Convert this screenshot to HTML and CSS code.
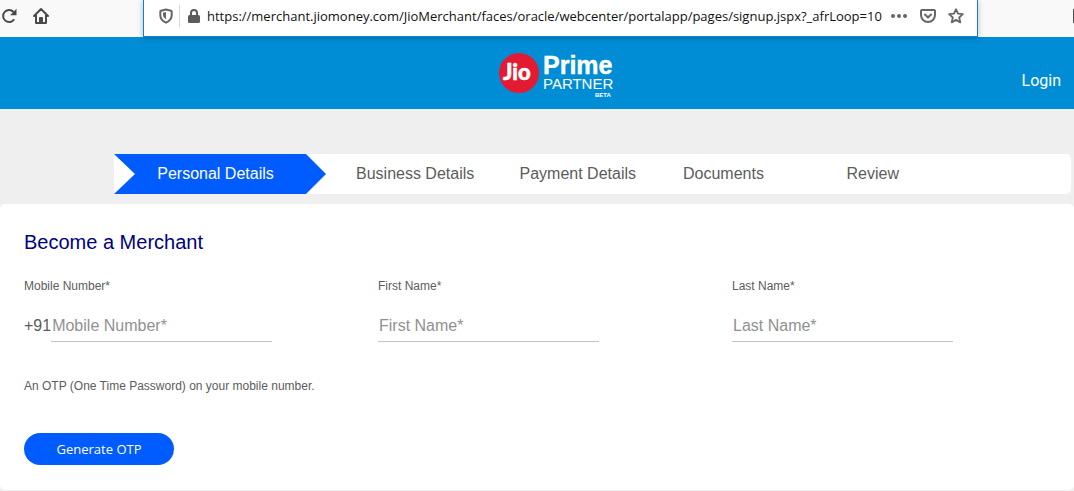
FILE: index.html
```html
<!DOCTYPE html>
<html lang="en">
<head>
<meta charset="utf-8">
<title>Become a Merchant</title>
<link rel="stylesheet" href="styles.css">
</head>
<body>
<div class="toolbar">
  <div class="toolbar-start">
    <button class="icon-button" type="button" aria-label="Reload">
      <svg width="18" height="18" viewBox="0 0 18 18" fill="none" stroke="#4a4a4a" stroke-width="2"><path d="M14.2 12.2A6 6 0 1 1 13.6 5"/><path d="M16.5 1.8v6.4h-6.4z" fill="#4a4a4a" stroke="none"/></svg>
    </button>
    <button class="icon-button" type="button" aria-label="Home">
      <svg width="18" height="18" viewBox="0 0 18 18" fill="none" stroke="#4a4a4a" stroke-width="2" stroke-linejoin="round" stroke-linecap="round"><path d="M2 9l7-7 7 7M4 8v8h10V8"/><path d="M7.5 15.5v-5h3v5z" fill="#4a4a4a" stroke-width="1"/></svg>
    </button>
  </div>
  <div class="address">
    <svg class="shield" width="14" height="16" viewBox="0 0 14 16" fill="none" stroke="#666" stroke-width="2"><path d="M7 1.5L2 2.7Q1.3 3 1.3 4v3c0 4 2.5 6.3 5.7 7.7 3.2-1.4 5.7-3.7 5.7-7.7V4q0-1-.7-1.3z"/><path d="M7 4v7.5C5 10 4 8.5 4 6.5V4.7z" fill="#666" stroke="none"/></svg>
    <span class="divider"></span>
    <svg class="lock" width="12" height="16" viewBox="0 0 12 16" fill="none"><path d="M3 8V5a3 3 0 0 1 6 0v3" stroke="#5c5c5c" stroke-width="2"/><rect y="7" width="12" height="8" rx="1.5" fill="#5c5c5c"/></svg>
    <input class="url" type="text" aria-label="Address" value="https://merchant.jiomoney.com/JioMerchant/faces/oracle/webcenter/portalapp/pages/signup.jspx?_afrLoop=10">
    <button class="icon-button" type="button" aria-label="Page actions">
      <svg width="18" height="16" viewBox="0 0 18 16" fill="#666"><circle cx="3" cy="8" r="2"/><circle cx="9" cy="8" r="2"/><circle cx="15" cy="8" r="2"/></svg>
    </button>
    <button class="icon-button" type="button" aria-label="Save to Pocket">
      <svg width="16" height="16" viewBox="0 0 16 16" fill="none" stroke="#666" stroke-width="2" stroke-linecap="round" stroke-linejoin="round"><path d="M2 2h12q1 0 1 1v4a7 7 0 0 1-14 0V3q0-1 1-1z"/><path d="M5 6.500l3 3 3-3"/></svg>
    </button>
    <button class="icon-button" type="button" aria-label="Bookmark">
      <svg width="16" height="16" viewBox="0 0 16 16" fill="none" stroke="#666" stroke-width="1.8" stroke-linejoin="round"><path d="M8 1.2l2 4.500 4.900.5-3.700 3.300 1.100 4.900L8 11.900l-4.300 2.500 1.100-4.900L1.100 6.200 6 5.700z"/></svg>
    </button>
  </div>
  <div class="toolbar-end"><span class="edge-mark"></span></div>
</div>
<header class="header">
  <svg class="logo" width="118" height="48" viewBox="0 0 118 48" role="img" aria-label="Jio Prime Partner Beta">
    <circle cx="21" cy="22" r="20" fill="#e31b32"/>
    <g fill="#fff" font-family="Liberation Sans, Arial, sans-serif">
      <text x="5" y="29" font-family="Lato, sans-serif" font-weight="900" font-size="22" stroke="#fff" stroke-width="0.5">Jio</text>
      <text x="45" y="23" font-weight="700" font-size="25" stroke="#fff" stroke-width="0.4">Prime</text>
      <text x="45" y="38" font-size="15">PARTNER</text>
      <text x="97" y="46" font-weight="700" font-size="6">BETA</text>
    </g>
  </svg>
  <a class="login" href="#login">Login</a>
</header>
<main>
  <ol class="steps">
    <li class="step step-active" aria-current="step">Personal Details</li>
    <li class="step">Business Details</li>
    <li class="step">Payment Details</li>
    <li class="step">Documents</li>
    <li class="step">Review</li>
  </ol>
  <form class="panel">
    <h1>Become a Merchant</h1>
    <div class="fields">
      <div class="field">
        <label for="mobile">Mobile Number*</label>
        <div class="control"><span>+91</span><input id="mobile" type="tel" placeholder="Mobile Number*"></div>
      </div>
      <div class="field">
        <label for="first">First Name*</label>
        <div class="control"><input id="first" type="text" placeholder="First Name*"></div>
      </div>
      <div class="field">
        <label for="last">Last Name*</label>
        <div class="control"><input id="last" type="text" placeholder="Last Name*"></div>
      </div>
    </div>
    <p class="hint">An OTP (One Time Password) on your mobile number.</p>
    <button class="submit" type="button">Generate OTP</button>
  </form>
</main>
</body>
</html>
```
FILE: styles.css
```css
* {
  box-sizing: border-box;
}

body {
  margin: 0;
  background: #efefef;
  color: #5c5c5c;
  font-family: "Liberation Sans", Arial, sans-serif;
}

button,
input {
  font: inherit;
  color: inherit;
  border: 0;
  padding: 0;
  background: transparent;
}

.toolbar {
  display: flex;
  height: 37px;
  background: #f9f9fa;
}

.toolbar-start {
  display: flex;
  align-items: center;
  gap: 14px;
  width: 143px;
  padding-bottom: 5px;
}

.icon-button {
  display: flex;
}

.address {
  position: relative;
  display: flex;
  flex: 1;
  align-items: center;
  min-width: 0;
  padding: 0 13px 5px 15px;
  background: #fff;
  border: 1px solid #0a84d0;
  border-top: 0;
  box-shadow: 0 1px 6px rgba(0, 0, 0, 0.25);
}

.divider {
  width: 1px;
  height: 22px;
  margin: 0 8px 0 6px;
  background: #d7d7db;
}

.url {
  flex: 1;
  min-width: 0;
  margin-left: 7px;
  color: #111;
  font-family: "Open Sans", sans-serif;
  font-size: 13px;
}

.address .icon-button {
  margin-left: 12px;
}

.address .url + .icon-button {
  margin-left: 4px;
}

.toolbar-end {
  display: flex;
  justify-content: flex-end;
  width: 96px;
  padding-top: 9px;
}

.edge-mark {
  width: 1px;
  height: 14px;
  background: #4a4a4a;
}

.header {
  display: grid;
  grid-template-columns: 1fr auto 1fr;
  height: 72px;
  padding: 14px 13px 0 53px;
  background: #008dd6;
}

.logo {
  grid-column: 2;
}

.login {
  justify-self: end;
  margin-top: 20px;
  color: #fff;
  font-family: Roboto, sans-serif;
  font-size: 16px;
  line-height: 20px;
  text-decoration: none;
}

.steps {
  display: grid;
  grid-template-columns: 242px repeat(4, 1fr);
  margin: 45px 3px 10px 114px;
  padding: 0 61px 0 0;
  list-style: none;
  background: #fff;
  border-radius: 0 5px 5px 0;
  font-size: 16px;
  line-height: 40px;
}

.step-active {
  width: 212px;
  padding-right: 9px;
  color: #fff;
  text-align: center;
  background: #005cff;
  clip-path: polygon(0 0, 192px 0, 100% 50%, 192px 100%, 0 100%, 21px 50%);
}

.panel {
  padding: 24px 12px 25px 24px;
  background: #fff;
  border-radius: 5px;
}

h1 {
  margin: 0;
  color: #000080;
  font-size: 20px;
  font-weight: 400;
  line-height: 28px;
}

.fields {
  display: grid;
  grid-template-columns: repeat(3, 1fr);
  gap: 24px;
  margin-top: 22px;
}

.field label {
  display: block;
  font-size: 12px;
  line-height: 16px;
}

.control {
  display: flex;
  align-items: center;
  margin-top: 16px;
  font-size: 16px;
}

.control input {
  width: 221px;
  height: 32px;
  padding: 0 1px;
  border-bottom: 1px solid #c4c4c4;
}

.control input::placeholder {
  color: #919191;
  opacity: 1;
}

.hint {
  margin: 36px 0 39px;
  font-size: 12px;
  line-height: 16px;
}

.submit {
  display: block;
  width: 150px;
  height: 32px;
  border-radius: 16px;
  color: #fff;
  background: #005cff;
  font-family: "Open Sans", sans-serif;
  font-size: 13px;
}
```
